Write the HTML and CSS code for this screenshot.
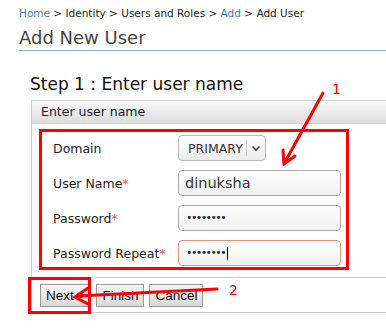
FILE: index.html
```html
<!DOCTYPE html>
<html lang="en">
<head>
  <meta charset="UTF-8" />
  <title>Add New User</title>
  <link rel="stylesheet" href="styles.css">
</head>
<body>
  <div class="page">
    <div class="breadcrumb">
      <a href="#">Home</a> &gt; Identity &gt; Users and Roles &gt; <a href="#">Add</a> &gt; Add User
    </div>
    <h2 class="title">Add New User</h2>

    <h3 class="step">Step 1 : Enter user name</h3>
    <div class="panel">
      <div class="panel-head">Enter user name</div>
      <div class="form-box">
        <div class="row">
          <label>Domain</label>
          <div class="select">
            <span class="select-text">PRIMARY</span>
            <span class="select-arrow">
              <svg width="10" height="7" viewBox="0 0 10 7"><path d="M1.5 1.5 L5 5 L8.5 1.5" fill="none" stroke="#444" stroke-width="1.6"/></svg>
            </span>
          </div>
        </div>
        <div class="row">
          <label>User Name<span class="req">*</span></label>
          <div class="input">dinuksha</div>
        </div>
        <div class="row">
          <label>Password<span class="req">*</span></label>
          <div class="input dots">&#8226;&#8226;&#8226;&#8226;&#8226;&#8226;&#8226;&#8226;</div>
        </div>
        <div class="row">
          <label>Password Repeat<span class="req">*</span></label>
          <div class="input dots focus">&#8226;&#8226;&#8226;&#8226;&#8226;&#8226;&#8226;&#8226;<span class="caret"></span></div>
        </div>
      </div>
      <div class="buttons">
        <button>Next &gt;</button>
        <button>Finish</button>
        <button>Cancel</button>
      </div>
    </div>

    <div class="next-mark"></div>
    <svg class="notes" width="386" height="328" viewBox="0 0 386 328">
      <g stroke="#ff0000" stroke-width="3" fill="none" stroke-linecap="round">
        <path d="M323 93 L285 162"/>
        <path d="M283 150 L284 164 L295 156"/>
        <path d="M217 289 L78 296"/>
        <path d="M88 288 L75 297 L88 304"/>
      </g>
      <text x="332" y="94" class="num">1</text>
      <text x="229" y="295" class="num">2</text>
    </svg>
  </div>
</body>
</html>
```

FILE: styles.css
```css
body {
  margin: 0;
  font-family: 'DejaVu Sans', sans-serif;
  color: #222;
  background: #fff;
}
.page {
  position: relative;
  width: 386px;
  height: 328px;
  overflow: hidden;
}
.breadcrumb {
  font-size: 10.5px;
  padding: 7px 0 0 19px;
  color: #222;
}
.breadcrumb a {
  color: #4a78b4;
  text-decoration: none;
}
.title {
  font-size: 18px;
  font-weight: normal;
  color: #444;
  margin: 8px 0 0 19px;
  padding-bottom: 2px;
  border-bottom: 1px solid #90a8cf;
}
.step {
  font-size: 17px;
  font-weight: normal;
  color: #111;
  margin: 23px 0 0 30px;
}
.panel {
  margin: 6px 0 0 31px;
  border-left: 1px solid #ccc;
}
.panel-head {
  height: 22px;
  line-height: 22px;
  padding-left: 9px;
  font-size: 12.5px;
  color: #222;
  background: linear-gradient(#f9f9f9, #dcdcdc);
  border-top: 1px solid #cfcfcf;
  border-bottom: 1px solid #d0d0d0;
}
.form-box {
  margin: 5px 37px 0 7px;
  border: 3px solid #ff0000;
  padding: 3px 5px 1px 11px;
  display: flex;
  flex-direction: column;
  gap: 9px;
}
.row {
  display: grid;
  grid-template-columns: 125px 1fr;
  align-items: center;
  height: 26px;
}
.row label {
  font-size: 12.5px;
  color: #222;
}
.req {
  color: #f05050;
}
.select {
  display: flex;
  align-items: center;
  width: 86px;
  height: 24px;
  border: 1px solid #bbb;
  border-radius: 4px;
  background: linear-gradient(#fdfdfd, #ececec);
  font-size: 12.5px;
  color: #333;
}
.select-text {
  padding-left: 9px;
  width: 58px;
}
.select-arrow {
  display: flex;
  align-items: center;
  justify-content: center;
  border-left: 1px solid #ccc;
  height: 16px;
  flex: 1;
}
.input {
  height: 24px;
  line-height: 24px;
  border: 1px solid #aaa;
  border-radius: 4px;
  background: linear-gradient(#fdfdfd, #f1f1f1);
  padding-left: 6px;
  font-size: 14.5px;
  color: #333;
}
.dots {
  font-size: 11px;
  letter-spacing: -1.6px;
  padding-left: 7px;
  color: #2a2f3a;
}
.focus {
  border-color: #e8967a;
}
.caret {
  display: inline-block;
  width: 1px;
  height: 13px;
  background: #000;
  vertical-align: middle;
  margin-left: 2px;
}
.buttons {
  margin-top: 7px;
  border-top: 1px solid #ccc;
  border-bottom: 1px solid #ccc;
  padding: 6px 0 5px 8px;
  display: flex;
  gap: 5px;
}
.buttons button {
  font-family: 'Liberation Sans', Arial, sans-serif;
  font-size: 13.5px;
  color: #111;
  height: 23px;
  padding: 0 5px;
  border: 1px solid #999;
  border-radius: 0;
  background: linear-gradient(#f6f6f6, #d9d9d9);
}
.next-mark {
  position: absolute;
  left: 28px;
  top: 277px;
  width: 57px;
  height: 31px;
  border: 3px solid #ff0000;
}
.notes {
  position: absolute;
  left: 0;
  top: 0;
}
.num {
  fill: #ff0000;
  font-family: 'DejaVu Sans', sans-serif;
  font-size: 14px;
}
```
